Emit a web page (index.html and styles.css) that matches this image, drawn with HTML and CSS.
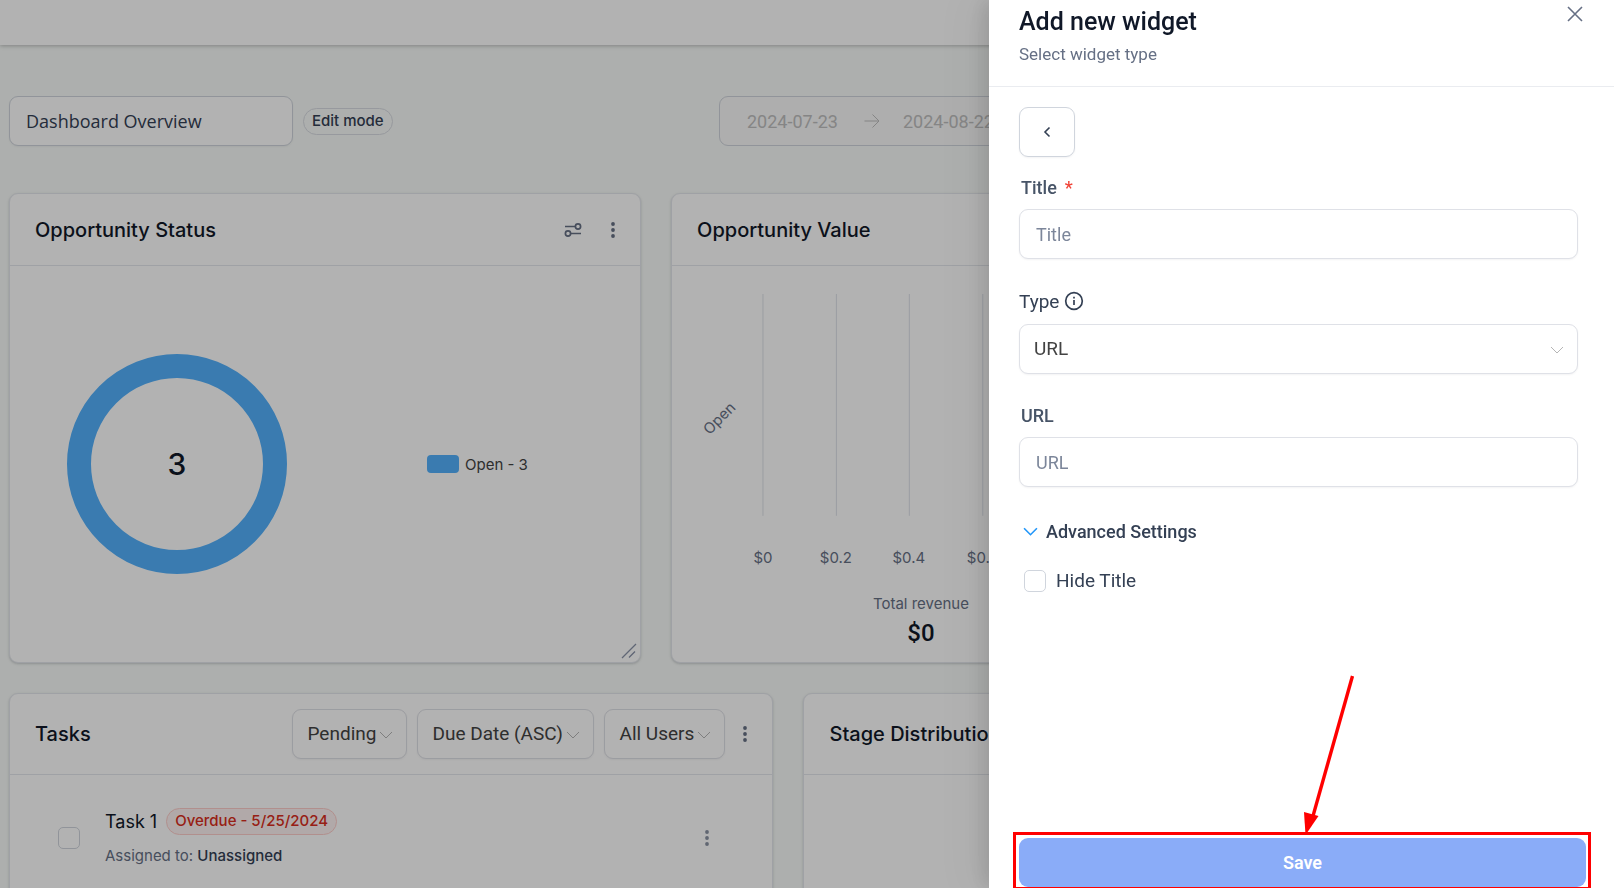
FILE: index.html
```html
<!DOCTYPE html>
<html lang="en">
<head>
<meta charset="utf-8">
<meta name="viewport" content="width=device-width, initial-scale=1">
<title>Dashboard Overview</title>
<link rel="stylesheet" href="styles.css">
</head>
<body>
<div class="page">
  <header class="topbar"></header>
  <main class="content">
    <div class="toolbar">
      <input class="dash-name" type="text" value="Dashboard Overview" aria-label="Dashboard name">
      <span class="badge">Edit mode</span>
      <div class="range">
        <input class="range-date" type="text" value="2024-07-23" aria-label="Start date" disabled>
        <svg class="range-arrow" viewBox="0 0 16 16" fill="none" stroke="currentColor"><path d="M0.500 8H15M8.500 1.500L15 8L8.500 14.500"/></svg>
        <input class="range-date" type="text" value="2024-08-22" aria-label="End date" disabled>
      </div>
    </div>

    <div class="grid">
      <section class="card span-5 card-chart">
        <div class="card-head">
          <h2 class="card-title">Opportunity Status</h2>
          <button class="icon-btn" type="button" aria-label="Filter">
            <svg class="icon-sliders" viewBox="0 0 18 14" fill="none" stroke="currentColor" stroke-width="1.700"><path d="M1 3.500H11M7 10.500H17"/><circle cx="14" cy="3.500" r="2.600"/><circle cx="4" cy="10.500" r="2.600"/></svg>
          </button>
          <button class="icon-btn" type="button" aria-label="More">
            <svg class="icon-dots" viewBox="0 0 4 16" fill="currentColor"><circle cx="2" cy="2" r="1.900"/><circle cx="2" cy="8" r="1.900"/><circle cx="2" cy="14" r="1.900"/></svg>
          </button>
        </div>
        <div class="donut-body">
          <div class="donut">3</div>
          <div class="legend"><span class="swatch"></span>Open - 3</div>
        </div>
        <svg class="resize" viewBox="0 0 16 16" fill="none" stroke="currentColor" stroke-width="1.300"><path d="M1 15L15 1M8 14.500L14 8.500"/></svg>
      </section>

      <section class="card span-4 card-chart">
        <div class="card-head">
          <h2 class="card-title">Opportunity Value</h2>
        </div>
        <div class="bar-body">
          <svg class="bar-chart" viewBox="0 0 498 312">
            <g class="rules"><path d="M91 28V250M164.500 28V250M237.500 28V250M311 28V250M384 28V250M457 28V250"/></g>
            <g class="ticks">
              <text x="91" y="297">$0</text>
              <text x="164" y="297">$0.2</text>
              <text x="237" y="297">$0.4</text>
              <text x="311" y="297">$0.6</text>
              <text x="384" y="297">$0.8</text>
              <text x="457" y="297">$1</text>
              <text transform="translate(51 156) rotate(-45)">Open</text>
            </g>
          </svg>
          <p class="total-label">Total revenue</p>
          <p class="total-value">$0</p>
        </div>
      </section>

      <section class="card span-6 wrap-row">
        <div class="card-head card-head-tall">
          <h2 class="card-title">Tasks</h2>
          <div class="filters">
            <span class="pick"><select class="pick-select" aria-label="Status"><option>Pending</option></select><svg class="chev" viewBox="0 0 14 8" fill="none" stroke="currentColor"><path d="M1 1L7 7L13 1"/></svg></span>
            <span class="pick"><select class="pick-select" aria-label="Sort"><option>Due Date (ASC)</option></select><svg class="chev" viewBox="0 0 14 8" fill="none" stroke="currentColor"><path d="M1 1L7 7L13 1"/></svg></span>
            <span class="pick"><select class="pick-select" aria-label="Users"><option>All Users</option></select><svg class="chev" viewBox="0 0 14 8" fill="none" stroke="currentColor"><path d="M1 1L7 7L13 1"/></svg></span>
          </div>
          <button class="icon-btn" type="button" aria-label="More">
            <svg class="icon-dots" viewBox="0 0 4 16" fill="currentColor"><circle cx="2" cy="2" r="1.900"/><circle cx="2" cy="8" r="1.900"/><circle cx="2" cy="14" r="1.900"/></svg>
          </button>
        </div>
        <div class="task">
          <input class="check" type="checkbox" aria-label="Complete Task 1">
          <div class="task-info">
            <div class="task-top"><span class="task-name">Task 1</span><span class="badge badge-red">Overdue - 5/25/2024</span></div>
            <div class="task-sub">Assigned to: <span class="task-who">Unassigned</span></div>
          </div>
          <button class="icon-btn" type="button" aria-label="Task options">
            <svg class="icon-dots icon-dots-soft" viewBox="0 0 4 16" fill="currentColor"><circle cx="2" cy="2" r="1.900"/><circle cx="2" cy="8" r="1.900"/><circle cx="2" cy="14" r="1.900"/></svg>
          </button>
        </div>
      </section>

      <section class="card span-6">
        <div class="card-head card-head-tall">
          <h2 class="card-title">Stage Distribution</h2>
        </div>
      </section>
    </div>
  </main>
</div>

<div class="mask"></div>

<aside class="drawer" role="dialog" aria-labelledby="drawer-title">
  <header class="drawer-head">
    <div>
      <h1 class="drawer-title" id="drawer-title">Add new widget</h1>
      <p class="drawer-sub">Select widget type</p>
    </div>
    <button class="close" type="button" aria-label="Close">
      <svg class="icon-close" viewBox="0 0 16 16" fill="none" stroke="currentColor" stroke-width="1.600"><path d="M1 1L15 15M15 1L1 15"/></svg>
    </button>
  </header>
  <form class="form" id="widget-form">
    <button class="back" type="button" aria-label="Back">
      <svg class="icon-back" viewBox="0 0 8 12" fill="none" stroke="currentColor" stroke-width="1.600"><path d="M6.500 1.500L2 6L6.500 10.500"/></svg>
    </button>
    <div class="field">
      <label class="label" for="f-title">Title <span class="req">*</span></label>
      <input class="control" id="f-title" type="text" placeholder="Title">
    </div>
    <div class="field">
      <label class="label label-plain" for="f-type">Type
        <svg class="icon-info" viewBox="0 0 20 20" fill="none" stroke="currentColor" stroke-width="1.700"><circle cx="10" cy="10" r="8.300"/><path d="M10 9V14M10 5.800V7.500"/></svg>
      </label>
      <span class="pick"><select class="control control-select" id="f-type"><option>URL</option></select><svg class="chev" viewBox="0 0 14 8" fill="none" stroke="currentColor"><path d="M1 1L7 7L13 1"/></svg></span>
    </div>
    <div class="field">
      <label class="label" for="f-url">URL</label>
      <input class="control" id="f-url" type="text" placeholder="URL">
    </div>
    <button class="advanced" type="button">
      <svg class="icon-adv" viewBox="0 0 14 8" fill="none" stroke="currentColor" stroke-width="1.500"><path d="M1 1L7 7L13 1"/></svg>
      Advanced Settings
    </button>
    <label class="hide-title"><input class="check" type="checkbox">Hide Title</label>
  </form>
  <footer class="drawer-foot">
    <button class="save" type="submit" form="widget-form">Save</button>
    <div class="callout">
      <svg class="callout-arrow" viewBox="0 0 50 160"><path d="M48.500 1L9 141" stroke="#f00" stroke-width="3.400"/><path d="M0 137L14.500 141L1.500 160Z" fill="#f00"/></svg>
    </div>
  </footer>
</aside>
</body>
</html>
```
FILE: styles.css
```css
*, *::before, *::after { box-sizing: border-box; }

body {
  margin: 0;
  height: 100vh;
  overflow: hidden;
  background: #f8fbf9;
  color: #101828;
  font-family: Inter, "Liberation Sans", sans-serif;
  font-size: 15px;
}

h1, h2, p { margin: 0; }
button, input, select { font: inherit; color: inherit; }
button { padding: 0; border: 0; background: none; }
svg { display: block; flex: none; }

.page { height: 100vh; overflow: hidden; }

.topbar {
  height: 45px;
  background: #fff;
  box-shadow: 0 1px 4px rgba(0, 0, 0, 0.25);
}

.content { padding: 51px 46px 0 9px; }

.toolbar {
  display: flex;
  align-items: center;
  gap: 10px;
  margin-bottom: 47px;
}

.dash-name {
  width: 284px;
  height: 50px;
  padding: 0 16px;
  border: 1px solid #d0d5dd;
  border-radius: 9px;
  background: #fff;
  box-shadow: 0 1px 2px rgba(16, 24, 40, 0.05);
  color: #344054;
  font-family: "Open Sans", "Noto Sans", sans-serif;
  font-size: 18px;
}

.badge {
  padding: 0 8px 2px;
  border: 1px solid #d8dbe2;
  border-radius: 14px;
  color: #344054;
  font-size: 15px;
  font-weight: 500;
  line-height: 23px;
}

.range {
  display: flex;
  align-items: center;
  width: 420px;
  height: 50px;
  margin-left: auto;
  margin-right: 429px;
  padding: 0 27px;
  border: 1px solid #d0d5dd;
  border-radius: 9px;
  background: #f9f9f9;
  color: #bfbfbf;
}

.range-date {
  width: 117px;
  padding: 0;
  border: 0;
  background: none;
  font-family: Roboto, sans-serif;
  font-size: 18px;
}

.range-arrow { width: 16px; height: 16px; margin-right: 23px; }

.grid {
  display: grid;
  grid-template-columns: repeat(12, 1fr);
  gap: 30px;
}

.span-4 { grid-column: span 4; }
.span-5 { grid-column: span 5; }
.span-6 { grid-column: span 6; }
.wrap-row { grid-column: 1 / span 6; }

.card {
  position: relative;
  min-height: 260px;
  border: 1px solid #e4e7ec;
  border-radius: 9px;
  background: #fff;
  box-shadow: 0 1px 3px rgba(16, 24, 40, 0.15), 0 1px 2px rgba(16, 24, 40, 0.06);
}

.card-chart { min-height: 470px; }

.card-head {
  display: flex;
  align-items: center;
  gap: 29px;
  height: 72px;
  padding: 0 25px;
  border-bottom: 1px solid #e4e7ec;
}

.card-head-tall { height: 81px; gap: 18px; }

.card-title {
  margin-right: auto;
  font-size: 20px;
  font-weight: 500;
  line-height: 30px;
}

.icon-btn { color: #667085; }
.icon-sliders { width: 18px; height: 14px; }
.icon-dots { width: 4px; height: 16px; }
.icon-dots-soft { color: #8a92a3; }

.donut-body {
  display: flex;
  align-items: center;
  height: 396px;
  padding-left: 57px;
}

.donut {
  display: grid;
  place-items: center;
  width: 220px;
  height: 220px;
  border: 24px solid #53b1fd;
  border-radius: 50%;
  font-size: 30px;
  font-weight: 500;
}

.legend {
  display: flex;
  align-items: center;
  gap: 6px;
  margin-left: 140px;
  color: #434343;
}

.swatch {
  width: 32px;
  height: 18px;
  border-radius: 4px;
  background: #53b1fd;
}

.resize {
  position: absolute;
  right: 3px;
  bottom: 3px;
  width: 16px;
  height: 16px;
  color: #8a92a8;
}

.bar-body { text-align: center; }
.bar-chart { width: 100%; margin-bottom: 14px; }
.rules path { stroke: #dde1e8; stroke-width: 1; }
.ticks text { fill: #667085; font-size: 15px; text-anchor: middle; }
.total-label { color: #667085; font-size: 15px; line-height: 24px; }
.total-value { font-family: Roboto, sans-serif; font-size: 24px; font-weight: 500; line-height: 34px; }

.filters { display: flex; gap: 10px; }

.pick { position: relative; display: block; }

.pick-select {
  appearance: none;
  height: 50px;
  padding: 0 30px 2px 14px;
  border: 1px solid #dfe1e7;
  border-radius: 9px;
  background: #fff;
  box-shadow: 0 1px 2px rgba(16, 24, 40, 0.05);
  color: #434343;
  font-family: Roboto, sans-serif;
  font-size: 19px;
}

.chev {
  position: absolute;
  right: 14px;
  top: 22px;
  width: 14px;
  height: 8px;
  color: #b5b5b5;
}

.task {
  display: flex;
  align-items: center;
  padding: 33px 63px 0 48px;
}

.check {
  appearance: none;
  flex: none;
  width: 22px;
  height: 22px;
  margin: 0;
  border: 1px solid #d0d5dd;
  border-radius: 5px;
  background: #fff;
}

.task-info { margin: 0 auto 0 25px; }
.task-top { display: flex; align-items: center; gap: 9px; margin-bottom: 9px; }
.task-name { font-size: 18px; }
.badge-red { border-color: #fecdca; background: #fef3f2; color: #d92d20; }
.task-sub { color: #667085; line-height: 24px; }
.task-who { color: #344054; font-weight: 500; }

.mask { position: fixed; inset: 0; background: rgba(0, 0, 0, 0.3); }

.drawer {
  position: fixed;
  inset: 0 0 0 auto;
  display: flex;
  flex-direction: column;
  width: 625px;
  background: #fff;
  box-shadow: -6px 0 16px rgba(0, 0, 0, 0.08), -9px 0 28px rgba(0, 0, 0, 0.05), -12px 0 48px 16px rgba(0, 0, 0, 0.03);
  font-family: Roboto, sans-serif;
  font-size: 18px;
}

.drawer-head {
  display: flex;
  justify-content: space-between;
  align-items: flex-start;
  height: 87px;
  padding: 5px 31px 0 30px;
  border-bottom: 1px solid #eaecf0;
}

.drawer-title { font-size: 25px; font-weight: 500; line-height: 34px; }
.drawer-sub { color: #667085; font-size: 17px; line-height: 30px; }
.close { padding-top: 1px; color: #667085; }
.icon-close { width: 16px; height: 16px; }

.form { flex: 1; padding: 20px 36px 0 30px; color: #344054; }

.back {
  display: grid;
  place-items: center;
  width: 56px;
  height: 50px;
  margin-bottom: 18px;
  border: 1px solid #d0d5dd;
  border-radius: 9px;
  box-shadow: 0 1px 2px rgba(16, 24, 40, 0.05);
}

.icon-back { width: 8px; height: 12px; }

.field { margin-bottom: 29px; }

.label {
  display: flex;
  align-items: center;
  gap: 8px;
  height: 24px;
  margin-bottom: 10px;
  padding-left: 2px;
  color: #475467;
  font-weight: 500;
}

.label-plain {
  gap: 5px;
  height: 26px;
  padding-left: 0;
  color: #344054;
  font-size: 19px;
  font-weight: 400;
}

.req { color: #f04438; }
.icon-info { width: 20px; height: 20px; }

.control {
  display: block;
  width: 100%;
  height: 50px;
  padding: 0 16px;
  border: 1px solid #dfe1e7;
  border-radius: 9px;
  background: #fff;
  box-shadow: 0 1px 2px rgba(16, 24, 40, 0.05);
}

.control::placeholder { color: #7c869a; opacity: 1; }
.control-select { appearance: none; padding: 0 14px 2px; color: #434343; font-size: 19px; }

.advanced {
  display: flex;
  align-items: center;
  gap: 8px;
  height: 30px;
  padding-left: 4px;
  font-weight: 500;
}

.icon-adv { width: 15px; height: 9px; color: #2196f9; }

.hide-title {
  display: flex;
  align-items: center;
  gap: 10px;
  margin-top: 23px;
  padding-left: 5px;
  font-size: 19px;
}

.drawer-foot { position: relative; padding: 0 28px 1px 30px; }

.save {
  width: 100%;
  height: 49px;
  border-radius: 9px;
  background: #8aacf8;
  color: #fff;
  font-weight: 600;
}

.callout {
  position: absolute;
  inset: -6px 23px -2px 24px;
  border: 3px solid #f00;
  pointer-events: none;
}

.callout-arrow {
  position: absolute;
  right: 234px;
  bottom: 100%;
  width: 50px;
  height: 160px;
}
```
